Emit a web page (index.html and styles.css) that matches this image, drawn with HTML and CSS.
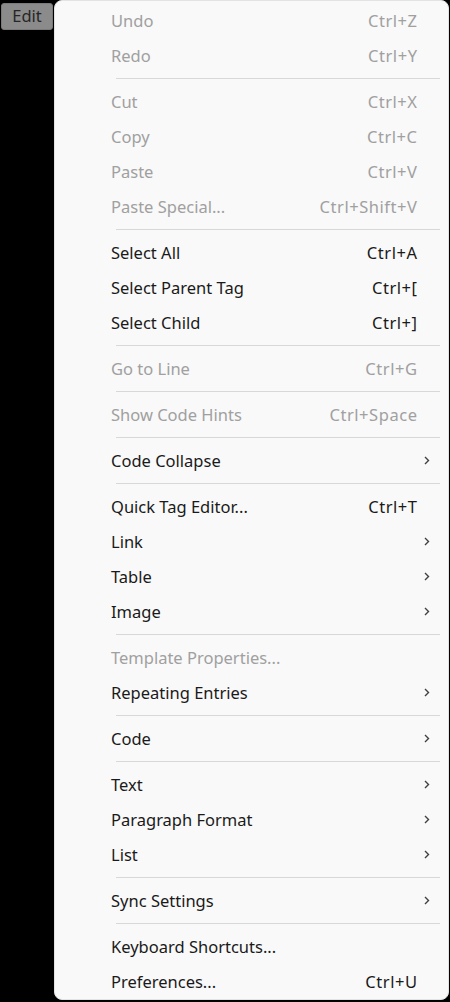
FILE: index.html
```html
<!DOCTYPE html>
<html>
<head>
<meta charset="utf-8">
<link rel="stylesheet" href="styles.css">
</head>
<body>
<div class="screen">
  <div class="menubar">
    <div class="menu-btn">Edit</div>
  </div>
  <div class="menu">
    <div class="item disabled"><span class="label">Undo</span><span class="key">Ctrl+Z</span><span class="sub"></span></div>
    <div class="item disabled"><span class="label">Redo</span><span class="key">Ctrl+Y</span><span class="sub"></span></div>
    <div class="sep"></div>
    <div class="item disabled"><span class="label">Cut</span><span class="key">Ctrl+X</span><span class="sub"></span></div>
    <div class="item disabled"><span class="label">Copy</span><span class="key">Ctrl+C</span><span class="sub"></span></div>
    <div class="item disabled"><span class="label">Paste</span><span class="key">Ctrl+V</span><span class="sub"></span></div>
    <div class="item disabled"><span class="label">Paste Special...</span><span class="key">Ctrl+Shift+V</span><span class="sub"></span></div>
    <div class="sep"></div>
    <div class="item"><span class="label">Select All</span><span class="key">Ctrl+A</span><span class="sub"></span></div>
    <div class="item"><span class="label">Select Parent Tag</span><span class="key">Ctrl+[</span><span class="sub"></span></div>
    <div class="item"><span class="label">Select Child</span><span class="key">Ctrl+]</span><span class="sub"></span></div>
    <div class="sep"></div>
    <div class="item disabled"><span class="label">Go to Line</span><span class="key">Ctrl+G</span><span class="sub"></span></div>
    <div class="sep"></div>
    <div class="item disabled"><span class="label">Show Code Hints</span><span class="key">Ctrl+Space</span><span class="sub"></span></div>
    <div class="sep"></div>
    <div class="item"><span class="label">Code Collapse</span><span class="key"></span><span class="sub"><svg viewBox="0 0 6 9" width="6" height="9"><path d="M1 1 L4.5 4.5 L1 8" /></svg></span></div>
    <div class="sep"></div>
    <div class="item"><span class="label">Quick Tag Editor...</span><span class="key">Ctrl+T</span><span class="sub"></span></div>
    <div class="item"><span class="label">Link</span><span class="key"></span><span class="sub"><svg viewBox="0 0 6 9" width="6" height="9"><path d="M1 1 L4.5 4.5 L1 8" /></svg></span></div>
    <div class="item"><span class="label">Table</span><span class="key"></span><span class="sub"><svg viewBox="0 0 6 9" width="6" height="9"><path d="M1 1 L4.5 4.5 L1 8" /></svg></span></div>
    <div class="item"><span class="label">Image</span><span class="key"></span><span class="sub"><svg viewBox="0 0 6 9" width="6" height="9"><path d="M1 1 L4.5 4.5 L1 8" /></svg></span></div>
    <div class="sep"></div>
    <div class="item disabled"><span class="label">Template Properties...</span><span class="key"></span><span class="sub"></span></div>
    <div class="item"><span class="label">Repeating Entries</span><span class="key"></span><span class="sub"><svg viewBox="0 0 6 9" width="6" height="9"><path d="M1 1 L4.5 4.5 L1 8" /></svg></span></div>
    <div class="sep"></div>
    <div class="item"><span class="label">Code</span><span class="key"></span><span class="sub"><svg viewBox="0 0 6 9" width="6" height="9"><path d="M1 1 L4.5 4.5 L1 8" /></svg></span></div>
    <div class="sep"></div>
    <div class="item"><span class="label">Text</span><span class="key"></span><span class="sub"><svg viewBox="0 0 6 9" width="6" height="9"><path d="M1 1 L4.5 4.5 L1 8" /></svg></span></div>
    <div class="item"><span class="label">Paragraph Format</span><span class="key"></span><span class="sub"><svg viewBox="0 0 6 9" width="6" height="9"><path d="M1 1 L4.5 4.5 L1 8" /></svg></span></div>
    <div class="item"><span class="label">List</span><span class="key"></span><span class="sub"><svg viewBox="0 0 6 9" width="6" height="9"><path d="M1 1 L4.5 4.5 L1 8" /></svg></span></div>
    <div class="sep"></div>
    <div class="item"><span class="label">Sync Settings</span><span class="key"></span><span class="sub"><svg viewBox="0 0 6 9" width="6" height="9"><path d="M1 1 L4.5 4.5 L1 8" /></svg></span></div>
    <div class="sep"></div>
    <div class="item"><span class="label">Keyboard Shortcuts...</span><span class="key"></span><span class="sub"></span></div>
    <div class="item"><span class="label">Preferences...</span><span class="key">Ctrl+U</span><span class="sub"></span></div>
  </div>
</div>
</body>
</html>
```

FILE: styles.css
```css
html, body {
  margin: 0;
  padding: 0;
  background: #000;
  height: 100%;
}

body {
  font-family: "Noto Sans", "Open Sans", sans-serif;
  font-size: 16.5px;
}

.screen {
  display: flex;
  align-items: flex-start;
  width: 450px;
  height: 1002px;
  overflow: hidden;
}

.menubar {
  width: 54px;
  padding: 3px 0 0 1px;
  box-sizing: border-box;
}

.menu-btn {
  width: 52px;
  height: 27px;
  box-sizing: border-box;
  background: #8b8b8b;
  border: 1px solid #7a7a7a;
  border-radius: 3px;
  color: #262626;
  font-size: 16.5px;
  line-height: 24px;
  text-align: center;
}

.menu {
  width: 395px;
  height: 1000px;
  box-sizing: border-box;
  background: #f9f9f9;
  border: 1px solid #e3e3e3;
  border-radius: 8px;
  padding: 2px 0 0 0;
  box-shadow: 1px 1px 3px rgba(0, 0, 0, 0.35);
}

.item {
  display: flex;
  align-items: center;
  height: 35px;
  padding-left: 56px;
  color: #1a1a1a;
}

.item.disabled {
  color: #a0a0a0;
}

.label {
  flex: 1;
  white-space: nowrap;
}

.key {
  white-space: nowrap;
  letter-spacing: 0.55px;
  margin-right: -0.55px;
}

.sub {
  width: 31px;
  box-sizing: border-box;
  padding-left: 7px;
  display: flex;
  align-items: center;
}

.sub svg {
  fill: none;
  stroke: #404040;
  stroke-width: 1.4;
}

.sep {
  height: 11px;
  margin: 0 8px 0 61px;
  display: flex;
  align-items: center;
}

.sep::before {
  content: "";
  display: block;
  width: 100%;
  height: 1px;
  background: #d8d8d8;
}
```
